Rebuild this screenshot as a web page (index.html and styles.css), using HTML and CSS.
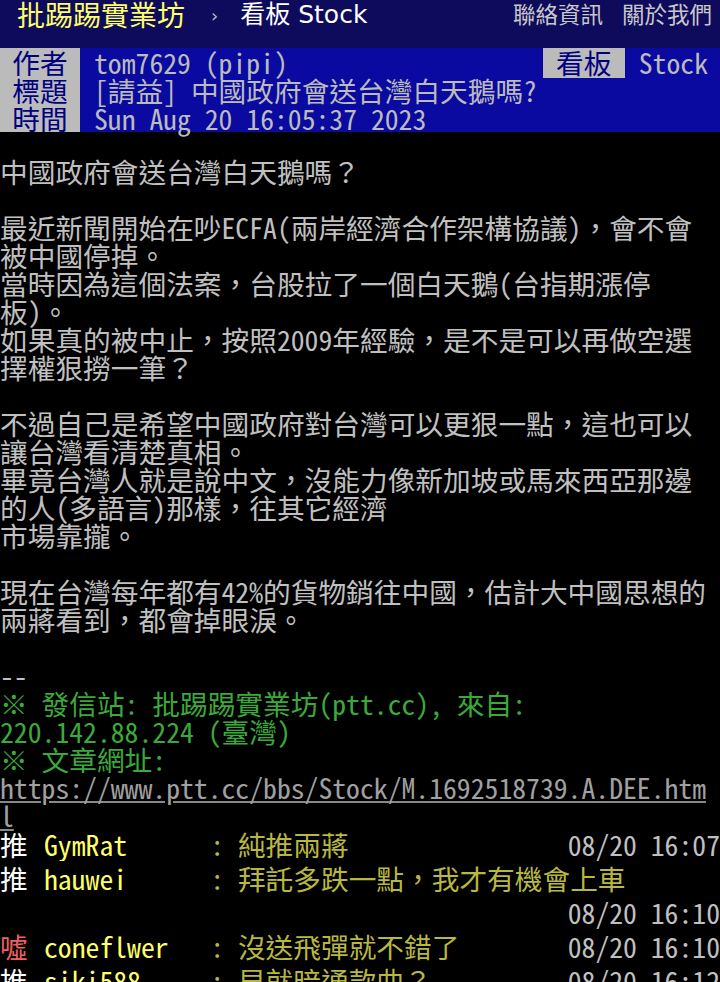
FILE: index.html
```html
<!DOCTYPE html>
<html lang="zh-Hant-TW">
<head>
    <meta charset="UTF-8">
    <meta name="viewport" content="width=device-width, initial-scale=1.0">
    <title>[請益] 中國政府會送台灣白天鵝嗎? - 看板 Stock - 批踢踢實業坊</title>
    <link rel="stylesheet" href="styles.css">
</head>
<body>
    <div class="topbar">
        <a class="brand" href="#">批踢踢實業坊</a>
        <span class="sep">›</span>
        <a class="board" href="#">看板 Stock</a>
        <div class="links">
            <a href="#">聯絡資訊</a>
            <a href="#">關於我們</a>
        </div>
    </div>

    <div class="bbs-screen">
        <div class="metaline">
            <span class="tag">作者</span><span class="value">tom7629 (pipi)</span>
            <span class="tag tag-board">看板</span><span class="value value-board">Stock</span>
        </div>
        <div class="metaline">
            <span class="tag">標題</span><span class="value">[請益] 中國政府會送台灣白天鵝嗎?</span>
        </div>
        <div class="metaline">
            <span class="tag">時間</span><span class="value">Sun Aug 20 16:05:37 2023</span>
        </div>

<div class="content">
中國政府會送台灣白天鵝嗎？

最近新聞開始在吵ECFA(兩岸經濟合作架構協議)，會不會
被中國停掉。
當時因為這個法案，台股拉了一個白天鵝(台指期漲停
板)。
如果真的被中止，按照2009年經驗，是不是可以再做空選
擇權狠撈一筆？

不過自己是希望中國政府對台灣可以更狠一點，這也可以
讓台灣看清楚真相。
畢竟台灣人就是說中文，沒能力像新加坡或馬來西亞那邊
的人(多語言)那樣，往其它經濟
市場靠攏。

現在台灣每年都有42%的貨物銷往中國，估計大中國思想的
兩蔣看到，都會掉眼淚。

--
<span class="f2">※ 發信站: 批踢踢實業坊(ptt.cc), 來自: 
220.142.88.224 (臺灣)</span>
<span class="f2">※ 文章網址: </span>
<a class="url" href="#">https://www.ptt.cc/bbs/Stock/M.1692518739.A.DEE.htm
l</a>
</div>

        <div class="pushes">
            <div class="push"><span class="push-tag">推 </span><span class="push-userid">GymRat</span><span class="push-content">: 純推兩蔣</span><span class="push-ipdatetime">08/20 16:07</span></div>
            <div class="push"><span class="push-tag">推 </span><span class="push-userid">hauwei</span><span class="push-content">: 拜託多跌一點，我才有機會上車</span><span class="push-ipdatetime">08/20 16:10</span></div>
            <div class="push"><span class="push-tag boo">噓 </span><span class="push-userid">coneflwer</span><span class="push-content">: 沒送飛彈就不錯了</span><span class="push-ipdatetime">08/20 16:10</span></div>
            <div class="push"><span class="push-tag">推 </span><span class="push-userid">siki588</span><span class="push-content">: 早就暗通款曲？</span><span class="push-ipdatetime">08/20 16:12</span></div>
        </div>
    </div>
</body>
</html>
```

FILE: styles.css
```css
body {
    margin: 0;
    padding: 0;
    background-color: #000;
    color: #c0c0c0;
    overflow: hidden;
}

a {
    text-decoration: none;
}

/* top bar */

.topbar {
    display: flex;
    align-items: flex-start;
    height: 48px;
    background-color: #0e0b5c;
    font-family: "DejaVu Sans", "Noto Sans CJK TC", sans-serif;
    white-space: nowrap;
}

.brand {
    color: #ffff66;
    font-size: 28px;
    line-height: 28px;
    margin-left: 17px;
    font-family: "Noto Sans CJK TC", sans-serif;
}

.sep {
    color: #bbb;
    font-size: 18px;
    line-height: 32px;
    margin-left: 26px;
}

.board {
    color: #fff;
    font-size: 25px;
    line-height: 30px;
    margin-left: 22px;
}

.links {
    display: flex;
    gap: 19px;
    margin-left: auto;
    margin-right: 8px;
}

.links a {
    color: #c8c8c8;
    font-size: 22.5px;
    line-height: 27px;
    font-family: "Noto Sans CJK TC", sans-serif;
}

/* article */

.bbs-screen {
    font-family: "Noto Sans Mono CJK TC", "DejaVu Sans Mono", "Noto Sans CJK TC", monospace;
    font-size: 27.7px;
    line-height: 28px;
}

.metaline {
    display: flex;
    height: 28px;
    background-color: #0a0aa0;
    white-space: nowrap;
}

.tag {
    width: 80px;
    text-align: center;
    background-color: #bbb;
    color: #000080;
    font-family: "Noto Sans CJK TC", sans-serif;
}

.tag-board {
    width: 82px;
    height: 30px;
    margin-left: auto;
}

.value {
    padding-left: 14px;
    color: #bbb;
}

.value-board {
    padding-right: 12px;
}

.content {
    margin-top: -3px;
    white-space: pre;
}

.f2 {
    color: #3aaa3a;
}

.url {
    color: #a0a0a0;
    text-decoration: underline;
    text-decoration-color: #888;
}

/* pushes */

.pushes {
    margin-top: -2px;
}

.push {
    overflow: hidden;
    line-height: 34px;
    white-space: nowrap;
}

.push-tag {
    display: inline-block;
    width: 44px;
    color: #fff;
    white-space: pre;
}

.push-tag.boo {
    color: #f06060;
}

.push-userid {
    display: inline-block;
    min-width: 6em;
    color: #ffff66;
}

.push-content {
    color: #b8b840;
}

.push-ipdatetime {
    float: right;
    color: #c0c0c0;
}
```
